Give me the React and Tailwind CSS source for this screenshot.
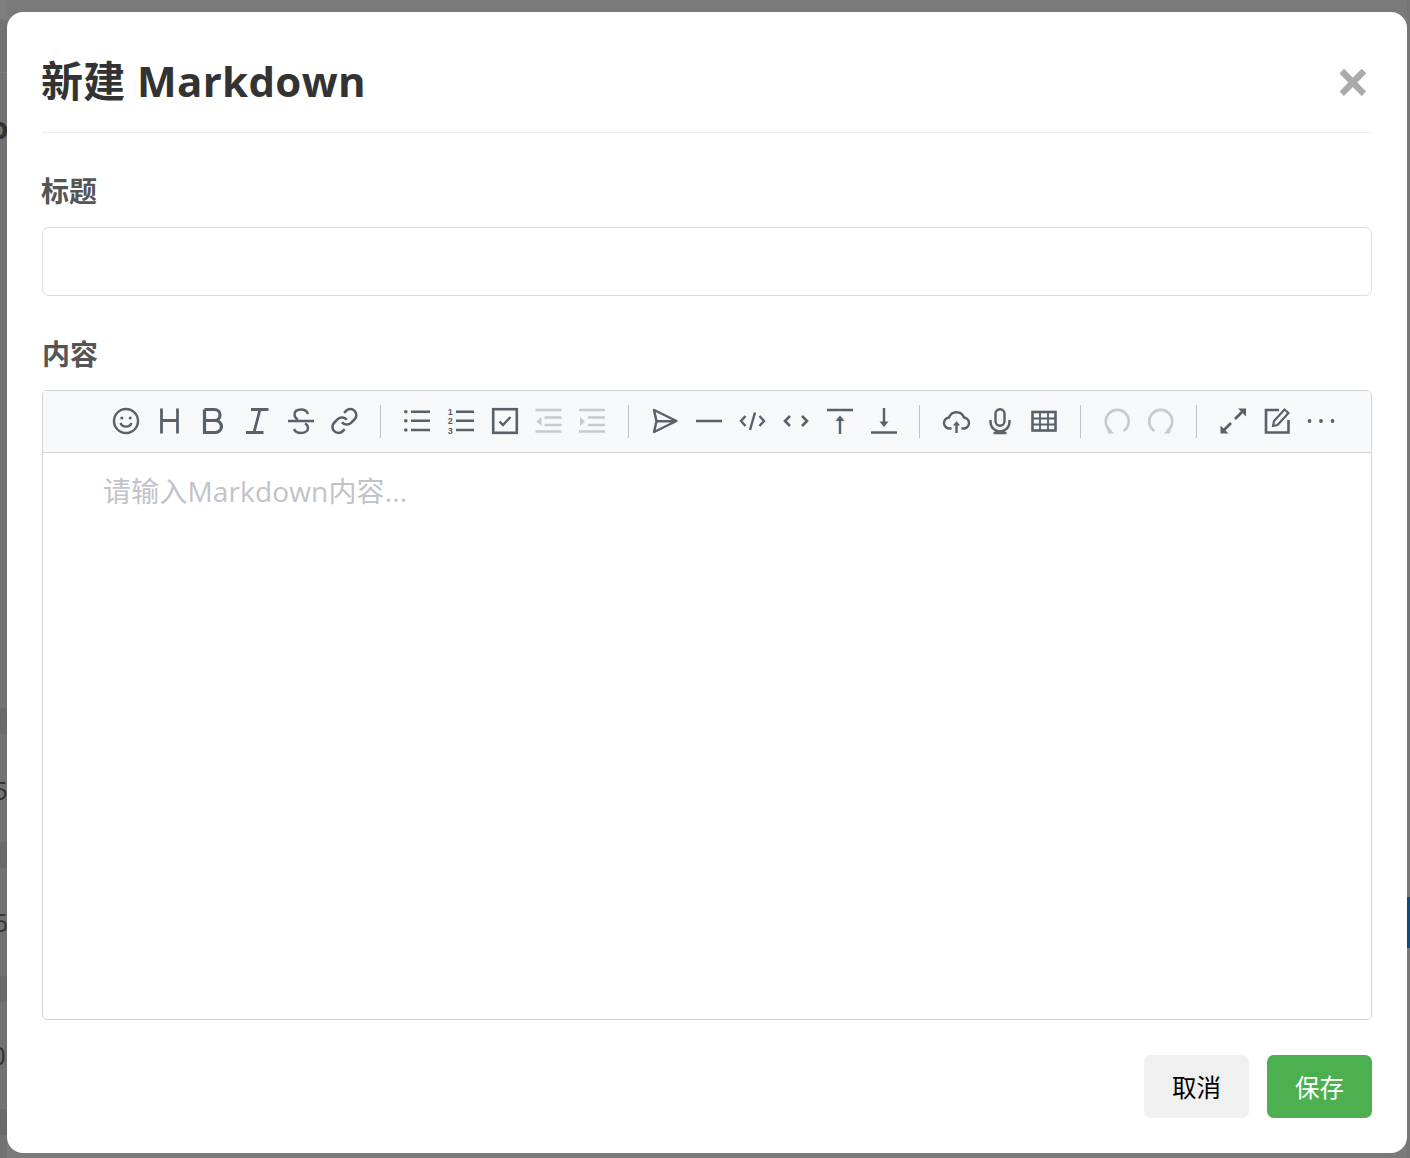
const FONT = { fontFamily: '"Open Sans","Noto Sans CJK SC",sans-serif' };

function Ic({ children, disabled }) {
  return (
    <div className="flex w-[43.75px] justify-center">
      <svg
        width="26"
        height="26"
        viewBox="0 0 26 26"
        fill="none"
        stroke={disabled ? "#c6c9cd" : "#586069"}
        strokeWidth="2.4"
        className="block overflow-visible"
      >
        {children}
      </svg>
    </div>
  );
}

const Sep = () => (
  <div className="flex w-[29px] justify-center pr-[1px]">
    <div className="-mt-[3px] h-[33px] w-[1px] bg-[#c0c4c8]" />
  </div>
);

function Toolbar() {
  const dark = "#586069";
  const light = "#c6c9cd";
  return (
    <div className="flex h-[62px] border-b border-[#d1d5da] bg-[#f6f8fa] pl-[61px] pt-[17px]">
      <Ic>
        <circle cx="13" cy="13" r="12" />
        <circle cx="8.8" cy="10" r="1.5" fill={dark} stroke="none" />
        <circle cx="17.2" cy="10" r="1.5" fill={dark} stroke="none" />
        <path d="M7.5 15a6 6 0 0 0 11 0" />
      </Ic>
      <Ic>
        <path d="M4.5 0.5V25.5M20.5 0.5V25.5M4.5 12.5H20.5" strokeWidth="2.8" />
      </Ic>
      <Ic>
        <path d="M4.5 1.5H14.5a5.5 5.5 0 0 1 0 11H4.5M14.5 12.5H15.5a6 6 0 0 1 0 12H4.5V1.5" strokeWidth="3.2" />
      </Ic>
      <Ic>
        <path d="M7 1.5H24.5M2 24.5H19.5M16 1.5L10 24.5" strokeWidth="2.8" />
      </Ic>
      <Ic>
        <path d="M0 13H26" />
        <path d="M20 6C19 3 16 1.5 13 1.5C9 1.5 6.5 3.5 6.5 6.5C6.5 9 8 10.5 10 11.5M17 15.5C19 16.5 20 18 20 20C20 23 17 25 13 25C9.5 25 7 23.5 6 21" />
      </Ic>
      <Ic>
        <g transform="translate(-2 -1.4) scale(1.2)" strokeWidth="2.1">
          <path d="M10 13a5 5 0 0 0 7.54.54l3-3a5 5 0 0 0-7.07-7.07l-1.72 1.71" />
          <path d="M14 11a5 5 0 0 0-7.54-.54l-3 3a5 5 0 0 0 7.07 7.07l1.71-1.71" />
        </g>
      </Ic>
      <Sep />
      <Ic>
        <path d="M7 3.7H26M7 12.7H26M7 22H26" />
        <circle cx="1.8" cy="3.7" r="1.8" fill={dark} stroke="none" />
        <circle cx="1.8" cy="12.7" r="1.8" fill={dark} stroke="none" />
        <circle cx="1.8" cy="22" r="1.8" fill={dark} stroke="none" />
      </Ic>
      <Ic>
        <path d="M8 3.7H26M8 12.7H26M8 22H26" />
        <g fill={dark} stroke="none" fontSize="9" fontWeight="700" fontFamily="Liberation Sans" textAnchor="middle">
          <text x="2.2" y="7">1</text>
          <text x="2.2" y="16">2</text>
          <text x="2.2" y="25.5">3</text>
        </g>
      </Ic>
      <Ic>
        <rect x="1.2" y="1.2" width="23.6" height="23.6" strokeWidth="2.6" />
        <path d="M7.5 13.5L11 17L18.5 9" />
      </Ic>
      <Ic disabled>
        <path d="M-0.5 2H25.5M8.5 9.5H25.5M8.5 17H25.5M-0.5 23.5H25.5" />
        <path d="M0.5 13.5L5.5 9V18Z" fill={light} stroke="none" />
      </Ic>
      <Ic disabled>
        <path d="M0 2H26M9 9.5H26M9 17H26M0 23.5H26" />
        <path d="M6 13.5L1 9V18Z" fill={light} stroke="none" />
      </Ic>
      <Sep />
      <Ic>
        <path d="M2 2L24.5 13L2 24L4.5 13.3ZM4.5 13.3H24" strokeLinejoin="round" />
      </Ic>
      <Ic>
        <path d="M0 13H26" />
      </Ic>
      <Ic>
        <path d="M5.5 8L1 13L5.5 18M19.5 8L24 13L19.5 18M15 4.5L10 22" />
      </Ic>
      <Ic>
        <path d="M7 8L2 13L7 18M19 8L24 13L19 18" strokeWidth="2.6" />
      </Ic>
      <Ic>
        <path d="M0 2H26" strokeWidth="2.6" />
        <path d="M13 26V11" />
        <path d="M8.5 13L13 7.5L17.5 13Z" fill={dark} stroke="none" />
      </Ic>
      <Ic>
        <path d="M0 24.5H26" strokeWidth="2.6" />
        <path d="M13 0V15" />
        <path d="M8.5 13.5L13 19L17.5 13.5Z" fill={dark} stroke="none" />
      </Ic>
      <Sep />
      <Ic>
        <g transform="translate(-0.5 0)">
          <path d="M8 20.5H6.5A5.5 5.5 0 0 1 5.5 9.5A8 8 0 0 1 20.5 9.5A5.5 5.5 0 0 1 19.5 20.5H18" />
          <path d="M13 25V15" />
          <path d="M9.3 17.5L13 13.3L16.7 17.5Z" fill={dark} stroke="none" />
        </g>
      </Ic>
      <Ic>
        <rect x="8.5" y="1.2" width="9" height="16.5" rx="4.5" />
        <path d="M3.5 12V14a9.5 9.5 0 0 0 19 0V12M13 23.5V25M6.5 25H19.5" />
      </Ic>
      <Ic>
        <rect x="1.5" y="4" width="23" height="18.5" strokeWidth="2.6" />
        <path d="M1.5 10.5H24.5M1.5 16.5H24.5M9 4V22.5M17 4V22.5" strokeWidth="1.8" />
      </Ic>
      <Sep />
      <Ic disabled>
        <path d="M7 23A11.5 11.5 0 1 1 19.5 23" strokeWidth="2.6" />
        <path d="M3 19.5L10.5 25.5H4Z" fill={light} stroke="none" />
      </Ic>
      <Ic disabled>
        <path d="M6.5 23A11.5 11.5 0 1 1 19 23" strokeWidth="2.6" />
        <path d="M23 19.5L15.5 25.5H22Z" fill={light} stroke="none" />
      </Ic>
      <Sep />
      <Ic>
        <path d="M15 11L22 4M4 22L11 15" strokeWidth="2.8" />
        <path d="M18 0.5H26V8.5ZM0.5 17.5V25.5H8.5Z" fill={dark} stroke="none" />
      </Ic>
      <Ic>
        <path d="M15 2H2V24.5H24.5V12" strokeWidth="2.6" />
        <path d="M20.5 1.5L24.5 5L13.5 17L9 18L10 13Z" strokeWidth="2.1" />
      </Ic>
      <Ic>
        <circle cx="1.5" cy="13" r="1.9" fill={dark} stroke="none" />
        <circle cx="13" cy="13" r="1.9" fill={dark} stroke="none" />
        <circle cx="24.5" cy="13" r="1.9" fill={dark} stroke="none" />
      </Ic>
    </div>
  );
}

function LeftStrip() {
  const clip = "overflow-hidden whitespace-nowrap text-[26px] leading-[34px] text-[#333333]";
  return (
    <div className="flex h-full w-[7px] flex-col bg-[#727272]">
      <div className="h-[20px] shrink-0 border-b border-[#777] bg-[#7e7e7e]" />
      <div className="h-[53px] shrink-0 border-b border-[#7b7b7b] bg-[#727272]" />
      <div className={`mt-[38px] h-[34px] shrink-0 font-bold ${clip}`}>
        <span className="-ml-[10px] inline-block text-[30px] leading-[34px]">o</span>
      </div>
      <div className="mt-[563px] h-[26px] shrink-0 bg-[#6a6a6a]" />
      <div className={`mt-[39px] h-[34px] shrink-0 ${clip}`}>
        <span className="-ml-[7px] inline-block">5</span>
      </div>
      <div className="mt-[35px] h-[26px] shrink-0 bg-[#6a6a6a]" />
      <div className={`mt-[37px] h-[34px] shrink-0 ${clip}`}>
        <span className="-ml-[7px] inline-block">6</span>
      </div>
      <div className="mt-[37px] h-[26px] shrink-0 bg-[#6a6a6a]" />
      <div className={`mt-[36px] h-[34px] shrink-0 ${clip}`}>
        <span className="-ml-[9px] inline-block">0.</span>
      </div>
      <div className="mt-[37px] h-[26px] shrink-0 bg-[#6a6a6a]" />
    </div>
  );
}

function RightStrip() {
  return (
    <div className="flex h-full w-[3px] flex-col bg-[#757575]">
      <div className="h-[897px] shrink-0" />
      <div className="h-[51px] shrink-0 bg-[#17487a]" />
    </div>
  );
}

export default function App() {
  return (
    <div className="flex h-[1158px] w-[1410px] overflow-hidden bg-[#7a7a7a]" style={FONT}>
      <LeftStrip />
      <div className="w-[1400px] pt-[12px]">
        <div className="flex h-[1141px] w-[1400px] flex-col rounded-[16px] bg-white px-[35px]">
          <div className="flex h-[121px] shrink-0 items-center justify-between border-b border-[#eeeeee] pt-[18px]">
            <h2 className="-ml-[1px] text-[42px] font-bold leading-[58px] tracking-[0.35px] text-[#333333]">新建 Markdown</h2>
            <span className="mr-[2px] text-[60px] font-bold leading-[40px] text-[#aaaaaa]">×</span>
          </div>
          <label className="-ml-[1px] mt-[38px] block h-[40px] text-[28px] font-bold leading-[40px] text-[#555555]">标题</label>
          <div className="mt-[16px] h-[69px] shrink-0 rounded-[7px] border border-[#dddddd] bg-white" />
          <label className="mt-[38px] block h-[40px] text-[28px] font-bold leading-[40px] text-[#555555]">内容</label>
          <div className="mt-[16px] flex h-[630px] shrink-0 flex-col overflow-hidden rounded-[5px] border border-[#d1d5da]">
            <Toolbar />
            <div className="pl-[60px] pt-[18px] text-[28px] leading-[40px] tracking-[0.15px] text-[#c0c3c7]">请输入Markdown内容...</div>
          </div>
          <div className="mt-[35px] flex justify-end gap-[18px]">
            <button className="h-[63px] w-[105px] rounded-[7px] bg-[#f0f0f0] pt-[3px] text-[24.5px] text-black">取消</button>
            <button className="h-[63px] w-[105px] rounded-[7px] bg-[#4caf50] pt-[3px] text-[24.5px] text-white">保存</button>
          </div>
        </div>
      </div>
      <RightStrip />
    </div>
  );
}
